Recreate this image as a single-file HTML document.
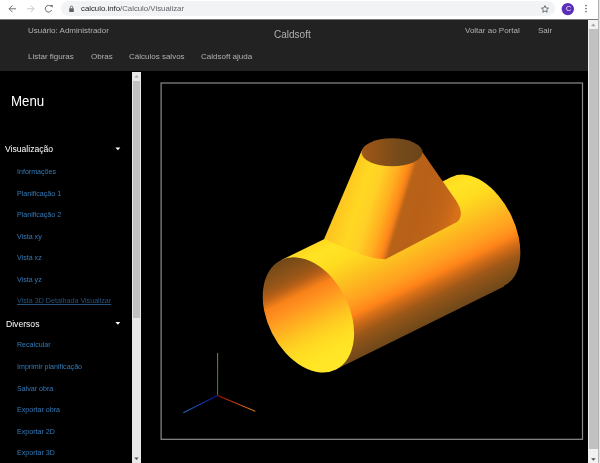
<!DOCTYPE html>
<html><head><meta charset="utf-8">
<style>
*{margin:0;padding:0;box-sizing:border-box}
html,body{width:600px;height:463px;overflow:hidden;background:#000;font-family:"Liberation Sans",sans-serif}
.abs{position:absolute;white-space:nowrap;will-change:transform}
#tb{position:absolute;left:0;top:0;width:600px;height:20px;background:#fff;border-bottom:1px solid #7a7a7a}
#url{position:absolute;left:61px;top:1px;width:494px;height:15.4px;border-radius:8px;background:#f1f3f4}
#hdr{position:absolute;left:0;top:20px;width:588px;height:51px;background:#222}
.hl{color:#b0b0b0;font-size:8px}
.side{color:#fff}
.lnk{color:#337ab7;font-size:7.1px}
#vs{position:absolute;left:588px;top:20px;width:12px;height:443px;background:#f1f1f1;z-index:5}
#ss{position:absolute;left:132px;top:72px;width:9px;height:391px;background:#e8e8e8}
</style></head><body>
<div id="tb">
  <svg width="600" height="20" style="position:absolute;left:0;top:0">
    <g fill="none" stroke="#5f6368" stroke-width="0.9">
      <path d="M16 8.8H9.3M12.4 5.5L9.1 8.8l3.3 3.3"/>
    </g>
    <g fill="none" stroke="#bdc1c6" stroke-width="0.9">
      <path d="M27.2 8.8H33.9M30.8 5.5L34.1 8.8l-3.3 3.3"/>
    </g>
    <g fill="none" stroke="#5f6368" stroke-width="0.95">
      <path d="M51.6 10A3.3 3.3 0 1 1 50.9 6.4"/>
    </g>
    <path d="M49.9 5h2.8v2.8z" fill="#5f6368"/>
  </svg>
  <div id="url"></div>
  <svg width="600" height="20" style="position:absolute;left:0;top:0">
    <rect x="69.2" y="8.3" width="4.6" height="3.8" rx="0.5" fill="#5f6368"/>
    <path d="M70.3 8.5V7.3a1.2 1.2 0 0 1 2.4 0V8.5" fill="none" stroke="#5f6368" stroke-width="0.9"/>
    <path d="M545 5.6l1.05 2.3 2.5.25-1.9 1.65.55 2.45L545 11l-2.2 1.25.55-2.45-1.9-1.65 2.5-.25z" fill="none" stroke="#5f6368" stroke-width="0.9"/>
    <circle cx="567.8" cy="9.1" r="6.2" fill="#5b2fb8"/>
    <circle cx="586" cy="5.6" r="0.8" fill="#5f6368"/>
    <circle cx="586" cy="8.6" r="0.8" fill="#5f6368"/>
    <circle cx="586" cy="11.6" r="0.8" fill="#5f6368"/>
    
  </svg>
  <div class="abs" style="left:565.6px;top:4.9px;font-size:7px;color:#fff">C</div>
  <div class="abs" style="left:81px;top:4.3px;font-size:7.8px;color:#202124">calculo.info<span style="color:#5f6368">/Calculo/Visualizar</span></div>
</div>
<div id="hdr">
  <div class="abs hl" style="left:28px;top:5.5px">Usuário: Administrador</div>
  <div class="abs hl" style="left:274.3px;top:8.6px;font-size:10px">Caldsoft</div>
  <div class="abs hl" style="left:464.5px;top:5.5px">Voltar ao Portal</div>
  <div class="abs hl" style="left:538px;top:5.5px">Sair</div>
  <div class="abs hl" style="left:28px;top:31.5px">Listar figuras</div>
  <div class="abs hl" style="left:90.8px;top:31.5px">Obras</div>
  <div class="abs hl" style="left:129px;top:31.5px">Cálculos salvos</div>
  <div class="abs hl" style="left:201px;top:31.5px">Caldsoft ajuda</div>
</div>
<div id="side">
  <div class="abs side" style="left:11px;top:93px;font-size:13.3px;transform:scaleY(1.12);transform-origin:0 0">Menu</div>
  <div class="abs side" style="left:5.4px;top:144px;font-size:8.6px">Visualização</div>
  <div class="abs lnk" style="left:17px;top:168px">Informações</div>
  <div class="abs lnk" style="left:17px;top:189.5px">Planificação 1</div>
  <div class="abs lnk" style="left:17px;top:211px">Planificação 2</div>
  <div class="abs lnk" style="left:17px;top:232.5px">Vista xy</div>
  <div class="abs lnk" style="left:17px;top:254px">Vista xz</div>
  <div class="abs lnk" style="left:17px;top:275.5px">Vista yz</div>
  <div class="abs lnk" style="left:17px;top:297px;text-decoration:underline;color:#23527c;font-size:7.15px">Vista 3D Detalhada Visualizar</div>
  <div class="abs side" style="left:5.6px;top:318.5px;font-size:8.6px">Diversos</div>
  <div class="abs lnk" style="left:17px;top:341.1px">Recalcular</div>
  <div class="abs lnk" style="left:17px;top:363.1px">Imprimir planificação</div>
  <div class="abs lnk" style="left:17px;top:384.6px">Salvar obra</div>
  <div class="abs lnk" style="left:17px;top:406.1px">Exportar obra</div>
  <div class="abs lnk" style="left:17px;top:427.6px">Exportar 2D</div>
  <div class="abs lnk" style="left:17px;top:449.1px">Exportar 3D</div>
  <svg width="140" height="463" style="position:absolute;left:0;top:0">
    <path d="M115.4 147.6h4.9l-2.45 2.6z" fill="#fff"/>
    <path d="M115.4 322.1h4.9l-2.45 2.6z" fill="#fff"/>
  </svg>
</div>
<div id="ss">
  <div style="position:absolute;left:1px;top:9px;width:7px;height:237px;background:#c1c1c1"></div>
  <svg width="10" height="391" style="position:absolute;left:0;top:0">
    <path d="M2.3 5.6h4.4L4.5 3.2z" fill="#a3a3a3"/>
    <path d="M2.3 385.5h4.4L4.5 388z" fill="#505050"/>
  </svg>
</div>
<div id="vs">
  <div style="position:absolute;left:1px;top:9px;width:8.5px;height:420px;background:#c1c1c1"></div>
  <div style="position:absolute;left:10px;top:-20px;width:1px;height:463px;background:#b4b4b4"></div>
  <div style="position:absolute;left:11px;top:-20px;width:1px;height:463px;background:#e6e6e6"></div>
  <svg width="12" height="443" style="position:absolute;left:0;top:0">
    <path d="M3 6.3h4.6L5.3 3.6z" fill="#a3a3a3"/>
    <path d="M3.1 438.2h4.6l-2.3 2.5z" fill="#505050"/>
  </svg>
</div>
<svg id="scene" width="600" height="463" style="position:absolute;left:0;top:0">
  <defs>
    <linearGradient id="gBody" gradientUnits="userSpaceOnUse" x1="281.35" y1="260.0" x2="335.45" y2="369.8">
      <stop offset="0.000" stop-color="#ffd820"/>
      <stop offset="0.092" stop-color="#ffe424"/>
      <stop offset="0.222" stop-color="#ffdc20"/>
      <stop offset="0.369" stop-color="#fcc420"/>
      <stop offset="0.516" stop-color="#ffa820"/>
      <stop offset="0.582" stop-color="#ff9c20"/>
      <stop offset="0.663" stop-color="#ff8418"/>
      <stop offset="0.721" stop-color="#d87018"/>
      <stop offset="0.774" stop-color="#bb6218"/>
      <stop offset="0.827" stop-color="#9c5818"/>
      <stop offset="0.884" stop-color="#8b5218"/>
      <stop offset="0.949" stop-color="#7a4c1a"/>
      <stop offset="1.000" stop-color="#704819"/>
    </linearGradient>
    <linearGradient id="gIn" gradientUnits="userSpaceOnUse" x1="281.35" y1="260.0" x2="335.45" y2="369.8">
      <stop offset="0.000" stop-color="#704618"/>
      <stop offset="0.051" stop-color="#7c4c18"/>
      <stop offset="0.111" stop-color="#8a5218"/>
      <stop offset="0.169" stop-color="#9a5618"/>
      <stop offset="0.208" stop-color="#aa5c18"/>
      <stop offset="0.243" stop-color="#c06418"/>
      <stop offset="0.316" stop-color="#f88218"/>
      <stop offset="0.390" stop-color="#ff9020"/>
      <stop offset="0.500" stop-color="#ffaa20"/>
      <stop offset="0.609" stop-color="#fec420"/>
      <stop offset="0.720" stop-color="#ffd822"/>
      <stop offset="0.844" stop-color="#ffe424"/>
      <stop offset="1.000" stop-color="#ffe828"/>
    </linearGradient>
    <linearGradient id="gCone" gradientUnits="userSpaceOnUse" x1="325.5" y1="176.6" x2="459.4" y2="217.5">
      <stop offset="0.100" stop-color="#fcc420"/>
      <stop offset="0.170" stop-color="#fec820"/>
      <stop offset="0.280" stop-color="#ffd822"/>
      <stop offset="0.370" stop-color="#ffd026"/>
      <stop offset="0.470" stop-color="#ffb020"/>
      <stop offset="0.540" stop-color="#ff8c1a"/>
      <stop offset="0.565" stop-color="#ec7c1a"/>
      <stop offset="0.585" stop-color="#c46818"/>
      <stop offset="0.600" stop-color="#b86218"/>
      <stop offset="0.690" stop-color="#b86018"/>
      <stop offset="0.850" stop-color="#bf6418"/>
      <stop offset="0.930" stop-color="#cc6a18"/>
      <stop offset="0.970" stop-color="#d87018"/>
    </linearGradient>
    <linearGradient id="gTop" gradientUnits="userSpaceOnUse" x1="361.5" y1="150" x2="422.5" y2="150">
      <stop offset="0.000" stop-color="#a05a18"/>
      <stop offset="0.080" stop-color="#9a5618"/>
      <stop offset="0.330" stop-color="#8a5018"/>
      <stop offset="0.620" stop-color="#744a1a"/>
      <stop offset="0.890" stop-color="#6e461a"/>
      <stop offset="1.000" stop-color="#6a4418"/>
    </linearGradient>
  </defs>
  <rect x="161.1" y="83" width="421.4" height="356.3" fill="none" stroke="#8c8c8c" stroke-width="1.2"/>
  <g>
    <path d="M280.99 260.18L451.6 177.08L504.5 286.3L335.8 369.6Z" fill="url(#gBody)"/>
    <path d="M504.24 285.59A60.3 36.6 64.2 1 0 451.76 177.01A60.3 36.6 64.2 1 0 504.24 285.59Z" fill="url(#gBody)"/>
    <path d="M361.5 151L324.2 238.8C335 244 348 250 360 254C368 257 377 259 385.5 259.2L455.5 222.8C458.5 221.5 460.6 218 460.8 214C461 210 459.5 206 456 200.5L422.5 152.3Z" fill="url(#gCone)"/>
    <ellipse cx="392" cy="152.3" rx="30.5" ry="14" fill="url(#gTop)"/>
    <path d="M336.09 369.48A61.2 40.75 63.1 1 0 280.71 260.32A61.2 40.75 63.1 1 0 336.09 369.48Z" fill="url(#gIn)"/>
  </g>
  <defs>
    <linearGradient id="axG" gradientUnits="userSpaceOnUse" x1="217.6" y1="395.5" x2="217.6" y2="353"><stop offset="0" stop-color="#109a10"/><stop offset="1" stop-color="#6a8a18"/></linearGradient>
    <linearGradient id="axB" gradientUnits="userSpaceOnUse" x1="217.6" y1="395.5" x2="183.3" y2="412.8"><stop offset="0" stop-color="#0a10a0"/><stop offset="1" stop-color="#1a6ab8"/></linearGradient>
    <linearGradient id="axR" gradientUnits="userSpaceOnUse" x1="217.6" y1="395.5" x2="255.3" y2="411.3"><stop offset="0" stop-color="#b00a0a"/><stop offset="1" stop-color="#d07a18"/></linearGradient>
  </defs>
  <g stroke-width="1.05" fill="none">
    <line x1="217.6" y1="395.5" x2="217.6" y2="353" stroke="url(#axG)"/>
    <line x1="217.6" y1="395.5" x2="183.3" y2="412.8" stroke="url(#axB)"/>
    <line x1="217.6" y1="395.5" x2="255.3" y2="411.3" stroke="url(#axR)"/>
  </g>
</svg>
</body></html>
